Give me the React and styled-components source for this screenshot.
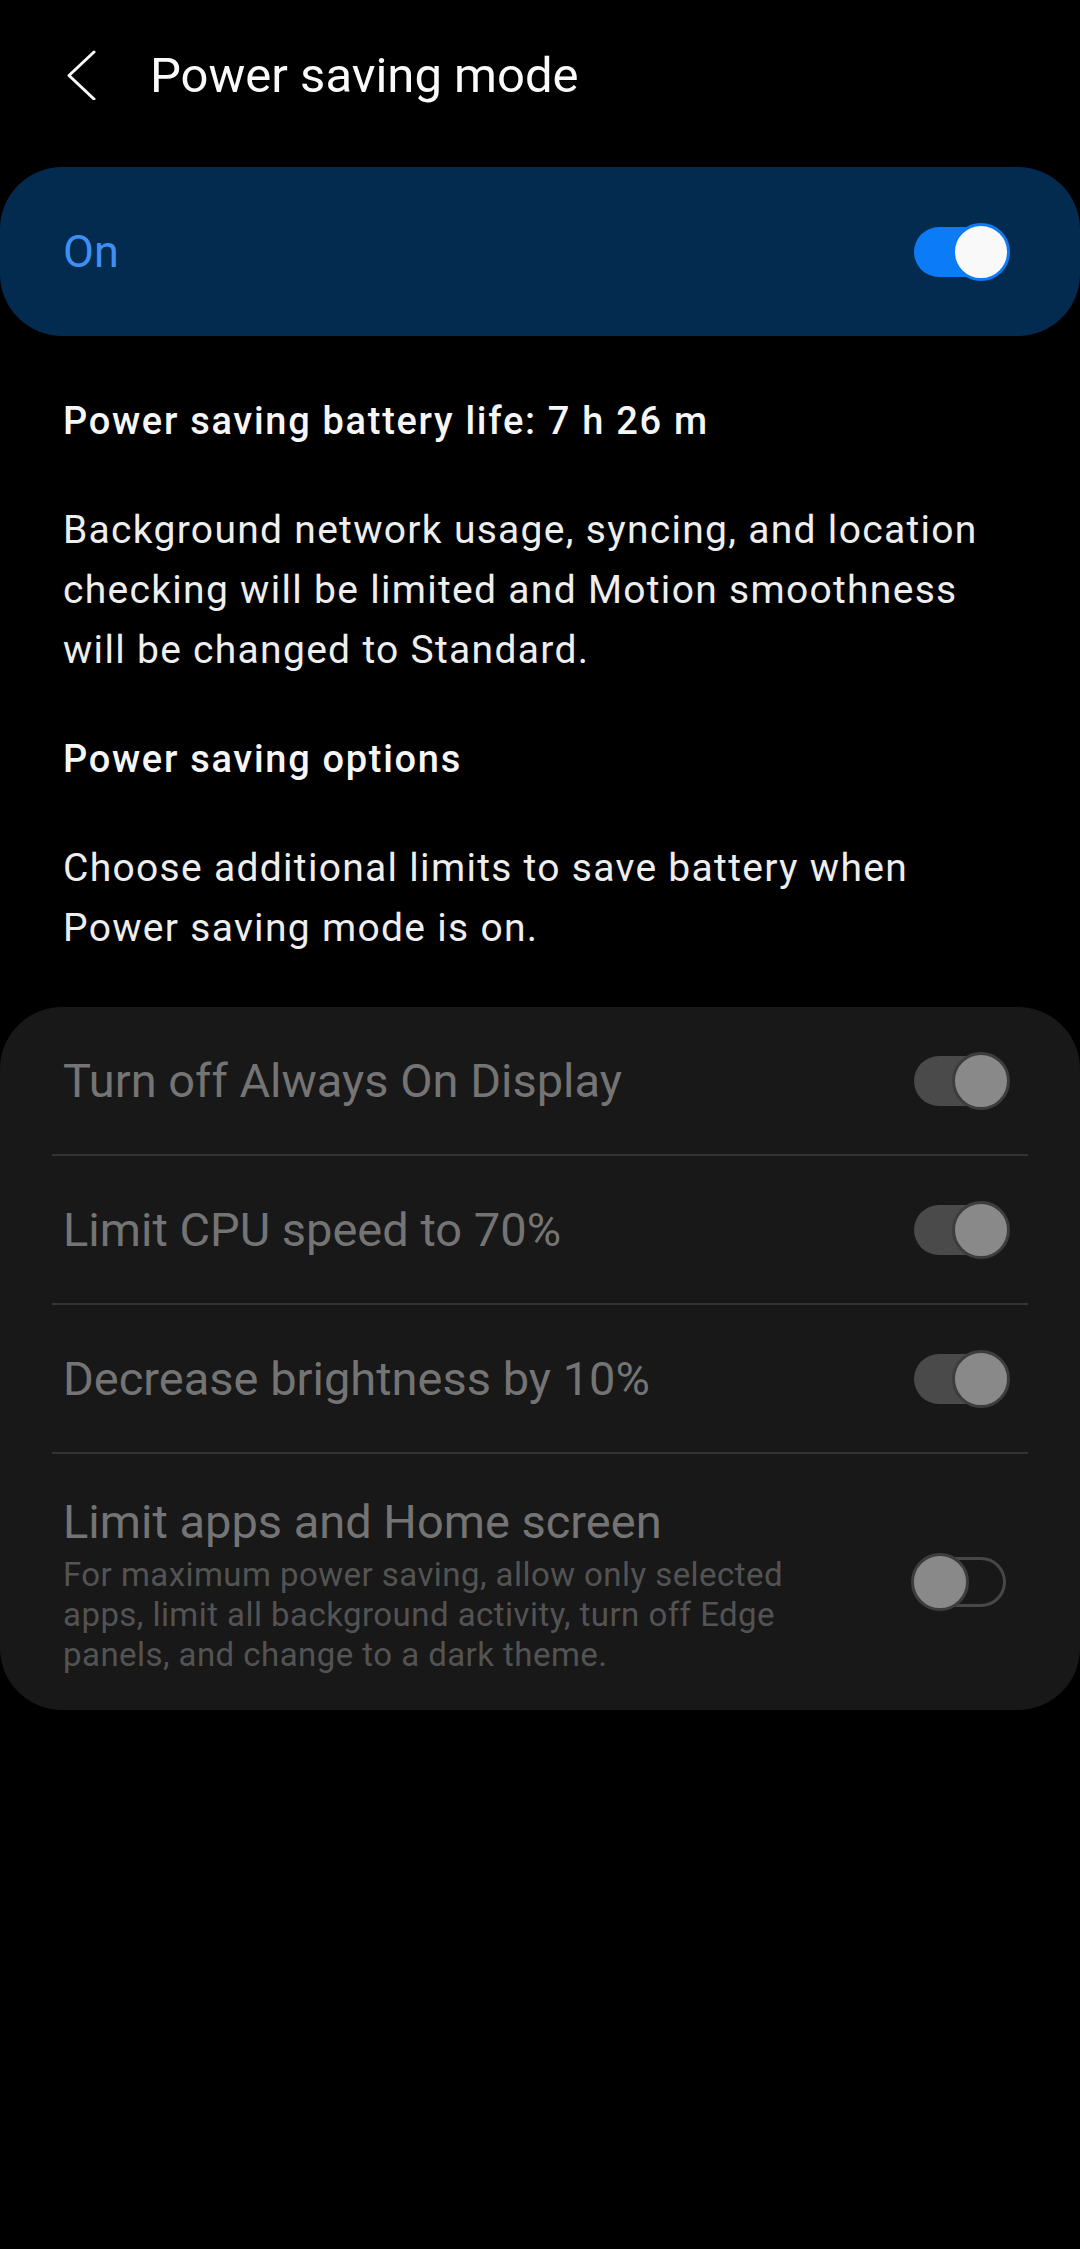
import styled, { createGlobalStyle } from "styled-components";

const GlobalStyle = createGlobalStyle`
  html, body {
    margin: 0;
    padding: 0;
    background: #000;
  }
  body {
    font-family: Roboto, "Noto Sans", "Liberation Sans", sans-serif;
    min-height: 2249px;
  }
`;

const Page = styled.div`
  width: 1080px;
  min-height: 2249px;
  background: #000;
  display: flex;
  flex-direction: column;
`;

const Header = styled.div`
  height: 150px;
  display: flex;
  align-items: center;
  padding-left: 67px;
  gap: 53px;
  color: #fafafa;

  & h1 {
    margin: 0;
    font-size: 49px;
    font-weight: 400;
  }
`;

const MasterCard = styled.div`
  margin-top: 17px;
  height: 169px;
  border-radius: 62px;
  background: #032a4f;
  display: flex;
  align-items: center;
  justify-content: space-between;
  padding: 0 70px 0 63px;

  & span {
    color: #3f8ff3;
    font-size: 45px;
  }
`;

const Info = styled.div`
  display: flex;
  flex-direction: column;
  gap: 49px;
  padding: 0 63px;
  margin-top: 55px;
  color: #eeeeee;
  line-height: 60px;
`;

const InfoHeading = styled.div`
  font-size: 38px;
  font-weight: 500;
  letter-spacing: 1.7px;
  color: #f6f6f6;
`;

const InfoText = styled.div`
  font-size: 39px;
  font-weight: 400;
  letter-spacing: 1.3px;
`;

const OptionsCard = styled.div`
  margin-top: 49px;
  background: #181818;
  border-radius: 62px;
  display: flex;
  flex-direction: column;
`;

const Row = styled.div`
  display: flex;
  align-items: center;
  justify-content: space-between;
  min-height: ${(p) => (p.$tall ? "256px" : "147px")};
  padding: 0 70px 0 63px;
`;

const Divider = styled.div`
  height: 2px;
  margin: 0 52px;
  background: #343434;
`;

const RowText = styled.div`
  display: flex;
  flex-direction: column;
  max-width: 760px;
  padding-top: ${(p) => (p.$tall ? "4px" : "0")};
`;

const RowTitle = styled.div`
  color: #747474;
  font-size: 47px;
  line-height: 56px;
`;

const RowSub = styled.div`
  margin-top: 5px;
  color: #535353;
  font-size: 33px;
  line-height: 40px;
  letter-spacing: 0.45px;
`;

const SwitchBox = styled.div`
  position: relative;
  flex: none;
  width: 99px;
  height: 58px;
`;

const Track = styled.div`
  position: absolute;
  left: 3px;
  right: 4px;
  top: 4px;
  bottom: 4px;
  border-radius: 25px;
  box-sizing: border-box;
  background: ${(p) =>
    p.$variant === "blue" ? "#0b7cf5" : p.$variant === "gray" ? "#4a4a4a" : "transparent"};
  border: ${(p) => (p.$variant === "off" ? "3px solid #474747" : "none")};
`;

const Thumb = styled.div`
  position: absolute;
  top: 0;
  ${(p) => (p.$variant === "off" ? "left: 0;" : "right: 0;")}
  width: 58px;
  height: 58px;
  box-sizing: border-box;
  border-radius: 50%;
  background: ${(p) => (p.$variant === "blue" ? "#f9f9f9" : "#898989")};
  border: 3px solid ${(p) => (p.$variant === "blue" ? "#0b7cf5" : "#3d3d3d")};
`;

const Switch = ({ variant }) => (
  <SwitchBox>
    <Track $variant={variant} />
    <Thumb $variant={variant} />
  </SwitchBox>
);

const options = [
  { title: "Turn off Always On Display", variant: "gray" },
  { title: "Limit CPU speed to 70%", variant: "gray" },
  { title: "Decrease brightness by 10%", variant: "gray" },
  {
    title: "Limit apps and Home screen",
    sub: "For maximum power saving, allow only selected apps, limit all background activity, turn off Edge panels, and change to a dark theme.",
    variant: "off",
  },
];

const App = () => {
  return (
    <Page>
      <GlobalStyle />
      <Header>
        <svg width="30" height="50" viewBox="0 0 30 50">
          <polyline
            points="27,2 2,25.5 27,49"
            fill="none"
            stroke="#fafafa"
            strokeWidth="3"
            strokeLinecap="round"
            strokeLinejoin="round"
          />
        </svg>
        <h1>Power saving mode</h1>
      </Header>

      <MasterCard>
        <span>On</span>
        <Switch variant="blue" />
      </MasterCard>

      <Info>
        <InfoHeading>Power saving battery life: 7 h 26 m</InfoHeading>
        <InfoText>
          Background network usage, syncing, and location checking will be limited and
          Motion smoothness will be changed to Standard.
        </InfoText>
        <InfoHeading>Power saving options</InfoHeading>
        <InfoText>
          Choose additional limits to save battery when Power saving mode is on.
        </InfoText>
      </Info>

      <OptionsCard>
        {options.map((o, i) => (
          <div key={o.title}>
            {i > 0 && <Divider />}
            <Row $tall={!!o.sub}>
              <RowText $tall={!!o.sub}>
                <RowTitle>{o.title}</RowTitle>
                {o.sub && <RowSub>{o.sub}</RowSub>}
              </RowText>
              <Switch variant={o.variant} />
            </Row>
          </div>
        ))}
      </OptionsCard>
    </Page>
  );
};

export default App;
